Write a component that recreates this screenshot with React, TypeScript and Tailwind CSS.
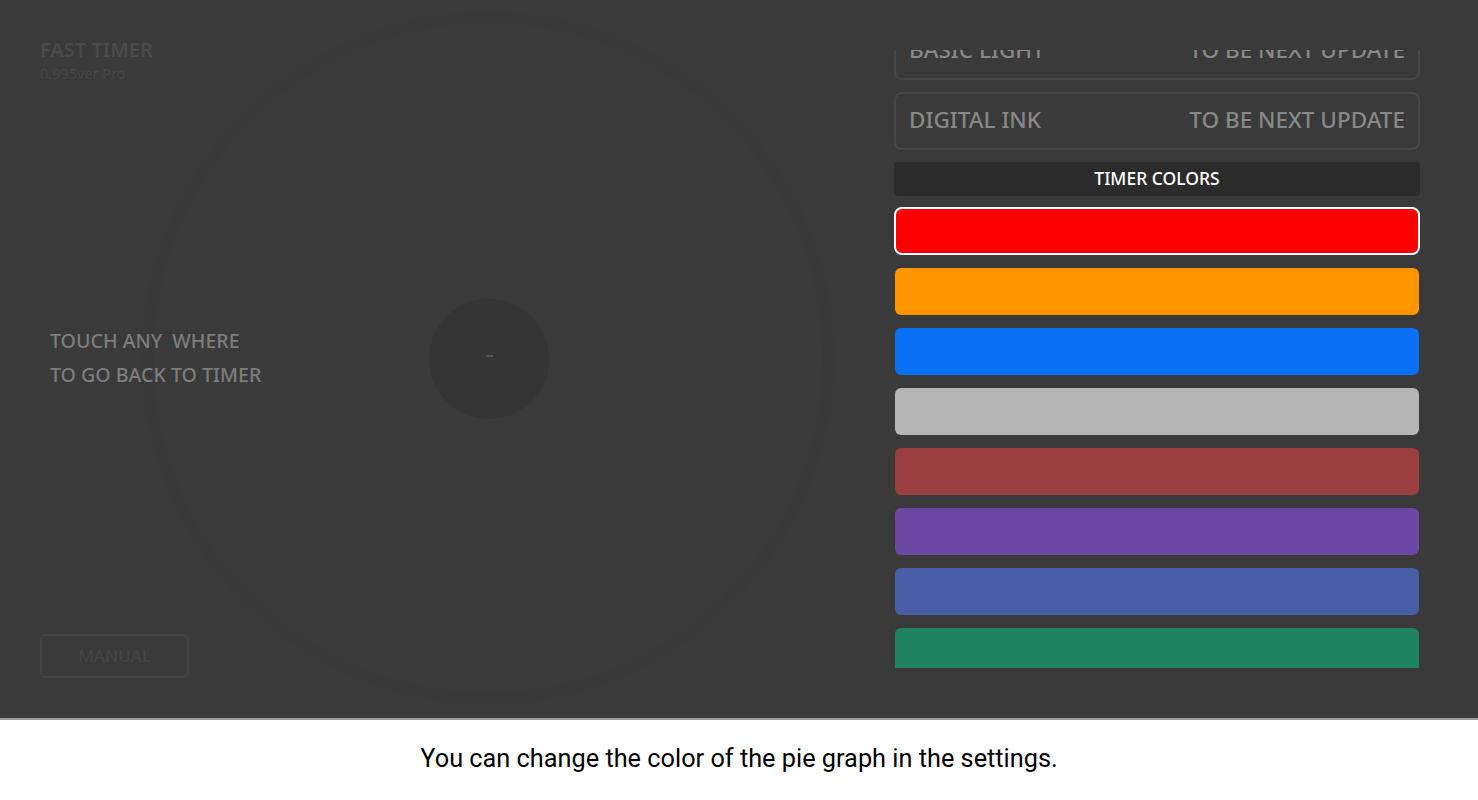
import React from "react";

const colors = [
  "#ff9500",
  "#0a70f5",
  "#b5b5b5",
  "#9b3e40",
  "#6a48a4",
  "#4a5ea8",
  "#1f8362",
];

function OptionRow({ label }: { label: string }) {
  return (
    <div className="flex h-[58px] shrink-0 items-center justify-between rounded-[8px] border-2 border-[#474747] pb-[3px] pl-[13px] pr-[13px] text-[22.5px] font-medium text-[#888888]">
      <span>{label}</span>
      <span>TO BE NEXT UPDATE</span>
    </div>
  );
}

export default function App() {
  return (
    <div
      className="flex h-[800px] w-[1478px] flex-col overflow-hidden bg-white"
      style={{ fontFamily: '"Noto Sans", "Open Sans", sans-serif' }}
    >
      <div className="relative flex h-[718px] shrink-0 bg-[#3a3a3a]">
        {/* decorative timer dial */}
        <div className="absolute left-[153px] top-[23px] h-[670px] w-[670px] rounded-full border border-[#3b3b3b] shadow-[0_0_18px_rgba(0,0,0,0.045)]" />
        <div className="absolute left-[429px] top-[299px] flex h-[120px] w-[120px] items-center justify-center rounded-full bg-[#353535]">
          <div className="mb-[6px] h-[2px] w-[7px] bg-[#555555]" />
        </div>

        <div className="relative flex w-[894px] shrink-0 flex-col pl-[40px] pt-[37px]">
          <div className="text-[20px] font-semibold leading-[25px] text-[#4b4b4b]">FAST TIMER</div>
          <div className="text-[14.5px] leading-[22px] text-[#474747]">0.995ver Pro</div>
          <div className="mt-[240px] pl-[10px] text-[19.6px] font-medium leading-[34px] text-[#7d7d7d]">
            <div>TOUCH ANY&nbsp; WHERE</div>
            <div>TO GO BACK TO TIMER</div>
          </div>
          <div className="mt-[242px] flex h-[44px] w-[149px] items-center justify-center rounded-[6px] border-2 border-[#434343] text-[17px] font-medium text-[#454545]">
            MANUAL
          </div>
        </div>

        <div className="relative mt-[50px] h-[618px] w-[526px] shrink-0 overflow-hidden">
          <div className="-mt-[28px] flex flex-col">
            <OptionRow label="BASIC LIGHT" />
            <div className="h-[12px]" />
            <OptionRow label="DIGITAL INK" />
            <div className="mt-[12px] flex h-[34px] items-center justify-center rounded-[4px] bg-[#2b2b2b] pb-[1px] text-[17.5px] font-medium text-white">
              TIMER COLORS
            </div>
            <div className="mt-[11px] h-[48px] rounded-[8px] border-[2.5px] border-white bg-[#ff0000]" />
            {colors.map((c) => (
              <div
                key={c}
                className="mx-[1px] mt-[13px] h-[47px] shrink-0 rounded-[6px]"
                style={{ backgroundColor: c }}
              />
            ))}
          </div>
        </div>
      </div>
      <div className="h-[2px] bg-[#9a9a9a]" />
      <div className="flex flex-1 items-start justify-center pt-[23px]">
        <span
          className="text-[25.3px] leading-[32px] text-black"
          style={{ fontFamily: 'Roboto, sans-serif' }}
        >
          You can change the color of the pie graph in the settings.
        </span>
      </div>
    </div>
  );
}
